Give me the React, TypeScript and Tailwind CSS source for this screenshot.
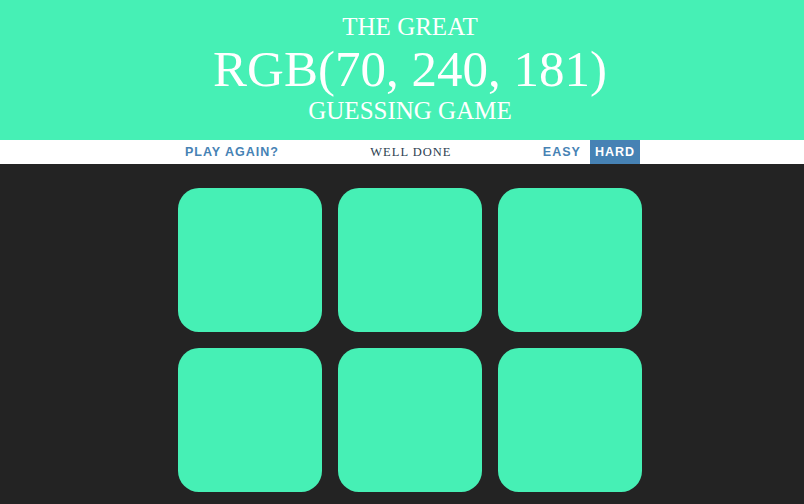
import { useState } from 'react'

const target = 'rgb(70, 240, 181)'
const squareColor = '#46f0b5'

export default function App() {
  const [hard, setHard] = useState(true)
  const squares = hard ? 6 : 3

  return (
    <div className="min-h-[504px] bg-[#232323]">
      <header className="h-[140px] bg-[#46f0b5] pl-[16px] pt-[13px] text-center font-normal uppercase text-white [font-family:'Liberation_Serif',serif]">
        <div className="text-[25px] leading-[1.1]">The Great</div>
        <div className="text-[51px] leading-[1.1]">{target}</div>
        <div className="text-[25px] leading-[1.1]">Guessing Game</div>
      </header>

      <div className="flex h-[24px] justify-center bg-white pl-[16px]">
        <div className="flex h-full">
          <button className="h-full px-[5px] pt-[1px] text-[12.5px] font-bold uppercase leading-[23px] tracking-[1px] text-[#4682b4] [font-family:'Liberation_Sans',sans-serif]">
            Play Again?
          </button>
          <span className="w-[254px] pt-[1px] text-center text-[12.5px] uppercase leading-[23px] tracking-[1px] text-[#2c3e50] [font-family:'Liberation_Serif',serif]">
            Well Done
          </span>
          <button
            onClick={() => setHard(false)}
            className={
              hard
                ? "h-full px-[5px] pt-[1px] text-[12.5px] font-bold uppercase leading-[23px] tracking-[1px] text-[#4682b4] [font-family:'Liberation_Sans',sans-serif]"
                : "h-full bg-[#4682b4] px-[5px] pt-[1px] text-[12.5px] font-bold uppercase leading-[23px] tracking-[1px] text-white [font-family:'Liberation_Sans',sans-serif]"
            }
          >
            Easy
          </button>
          <button
            onClick={() => setHard(true)}
            className={
              hard
                ? "ml-[4px] h-full bg-[#4682b4] px-[5px] pt-[1px] text-[12.5px] font-bold uppercase leading-[23px] tracking-[1px] text-white [font-family:'Liberation_Sans',sans-serif]"
                : "ml-[4px] h-full px-[5px] pt-[1px] text-[12.5px] font-bold uppercase leading-[23px] tracking-[1px] text-[#4682b4] [font-family:'Liberation_Sans',sans-serif]"
            }
          >
            Hard
          </button>
        </div>
      </div>

      <div className="flex justify-center pl-[16px]">
        <div className="mt-[24px] grid grid-cols-[repeat(3,144px)] gap-[16px]">
          {Array.from({ length: squares }).map((_, i) => (
            <div
              key={i}
              className="h-[144px] w-[144px] rounded-[21px]"
              style={{ backgroundColor: squareColor }}
            />
          ))}
        </div>
      </div>
    </div>
  )
}
